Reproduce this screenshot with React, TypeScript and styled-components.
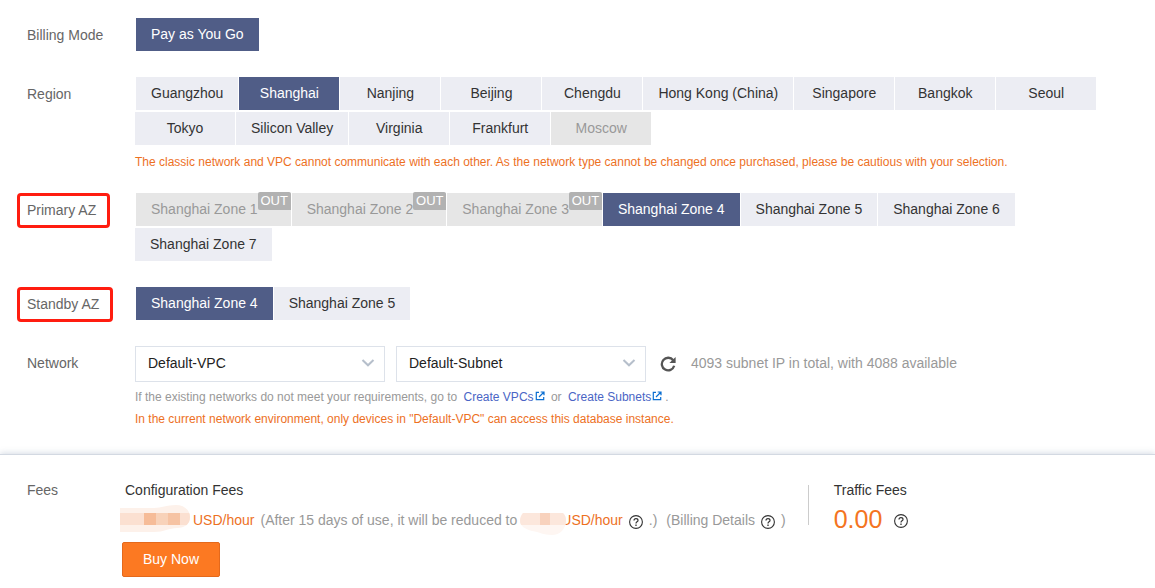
import React, { useState } from "react";
import styled, { createGlobalStyle, css } from "styled-components";

const GlobalStyle = createGlobalStyle`
  *, *::before, *::after { box-sizing: border-box; }
  body {
    margin: 0;
    background: #fff;
    color: #333;
    font-family: "Liberation Sans", Arial, sans-serif;
    font-size: 14px;
    line-height: 22px;
  }
  button, select { font: inherit; }
`;

const Page = styled.main`
  display: flex;
  flex-direction: column;
`;

const Form = styled.form`
  display: flex;
  flex-direction: column;
  gap: 20px;
  padding: 18px 27px 24px;
`;

const Row = styled.div`
  display: grid;
  grid-template-columns: 108px 1fr;
`;

const Label = styled.span<{ $boxed?: boolean }>`
  justify-self: start;
  align-self: start;
  line-height: 35px;
  color: #666;
  ${({ $boxed }) =>
    $boxed &&
    css`
      margin-left: -10px;
      padding: 0 11px 0 7px;
      line-height: 29px;
      border: 3px solid #ff1d10;
      border-radius: 4px;
    `}
`;

const Options = styled.div`
  display: flex;
  flex-wrap: wrap;
  gap: 2px 1px;
  padding-bottom: 6px;
`;

const Option = styled.button<{ $selected?: boolean; $soldOut?: boolean }>`
  position: relative;
  min-width: 100px;
  height: 33px;
  padding: 0 ${({ $soldOut }) => ($soldOut ? 33 : 15)}px 2px 15px;
  border: 0;
  background: ${({ $selected }) => ($selected ? "#505d87" : "#ecedf3")};
  color: ${({ $selected }) => ($selected ? "#fff" : "#333")};
  white-space: nowrap;
  cursor: pointer;

  &:first-child {
    margin-left: 1px;
  }

  &:disabled {
    background: #e6e6e6;
    color: #999;
    cursor: not-allowed;
  }
`;

const OutBadge = styled.span`
  position: absolute;
  top: -1px;
  right: 0;
  width: 33px;
  height: 18px;
  border-radius: 2px 2px 0 2px;
  background: #b2b2b2;
  color: #fff;
  font-size: 13px;
  line-height: 18px;
  text-align: center;
`;

const Notes = styled.div`
  font-size: 12px;
`;

const Note = styled.p<{ $warning?: boolean }>`
  margin: 0;
  color: ${({ $warning }) => ($warning ? "#ed711f" : "#999")};
`;

const DocLink = styled.a`
  margin: 0 3px;
  color: #4a65c5;
  text-decoration: none;
  svg { margin-left: 1px; }
`;

const NetworkControls = styled.div`
  display: flex;
  align-items: center;
  padding-bottom: 4px;
`;

const SelectBox = styled.div`
  position: relative;
  width: 250px;
  margin-right: 11px;

  svg {
    position: absolute;
    top: 12px;
    right: 10px;
    pointer-events: none;
  }
`;

const Select = styled.select`
  width: 100%;
  height: 36px;
  padding: 0 32px 2px 12px;
  border: 1px solid #dde2ea;
  border-radius: 0;
  background: #fff;
  color: #222;
  appearance: none;
`;

const IconButton = styled.button`
  display: inline-flex;
  padding: 0;
  border: 0;
  background: none;
  color: #555;
  cursor: pointer;
`;

const RefreshButton = styled(IconButton)`
  margin: 0 15px 0 3px;
`;

const HelpButton = styled(IconButton)`
  padding-top: 4px;
`;

const Availability = styled.span`
  padding-bottom: 2px;
  color: #999;
`;

const Footer = styled.footer`
  display: grid;
  grid-template-columns: 95px auto auto 1fr;
  padding: 24px 27px 10px;
  border-top: 1px solid #d3d9e2;
  box-shadow: 0 -1px 6px rgba(120, 140, 165, 0.3);
`;

const FooterLabel = styled.span`
  color: #666;
`;

const Fee = styled.section`
  display: flex;
  flex-direction: column;
  align-items: flex-start;
  padding-left: 3px;
`;

const Divider = styled.div`
  width: 1px;
  height: 40px;
  margin: 6px 22px 0;
  background: #ccc;
`;

const FeeTitle = styled.h2`
  margin: 0;
  font-size: 14px;
  font-weight: 400;
  line-height: 22px;
`;

const FeeLine = styled.div`
  display: flex;
  align-items: center;
  height: 36px;
  margin-left: -5px;
  padding-top: 2px;
  color: #999;
  white-space: nowrap;
`;

const Unit = styled.span<{ $covered?: boolean }>`
  margin-left: ${({ $covered }) => ($covered ? -5 : 3)}px;
  margin-right: 6px;
  color: #ed711f;
`;

const Details = styled.span`
  margin: 0 6px 0 9px;
`;

const Closing = styled.span`
  margin-left: 6px;
`;

const Amount = styled.strong`
  margin-right: 12px;
  color: #f47421;
  font-size: 25px;
  font-weight: 400;
  line-height: 36px;
`;

const TrafficLine = styled.div`
  display: flex;
  align-items: center;
`;

const BuyButton = styled.button`
  width: 98px;
  height: 35px;
  margin: 5px 0 0 -3px;
  padding: 0 0 2px;
  border: 1px solid #e4691c;
  border-radius: 2px;
  background: #fc7922;
  color: #fff;
  cursor: pointer;
`;

const Chevron = () => (
  <svg width="14" height="10" viewBox="0 0 14 10" fill="none" stroke="#b6bfcb" strokeWidth="2" aria-hidden="true">
    <path d="M1.5 2 7 7.3 12.5 2" />
  </svg>
);

const ExternalIcon = () => (
  <svg width="10" height="10" viewBox="0 0 10 10" fill="none" stroke="#0a6ed1" strokeWidth="1.2" aria-hidden="true">
    <path d="M4 1.3H1.3v7.4h7.4V6M5.7 1H9v3.3M9 1 4 6" />
  </svg>
);

const RefreshIcon = () => (
  <svg width="16" height="16" viewBox="0 0 16 16" fill="none" aria-hidden="true">
    <path d="M13.2 4.3A6.3 6.3 0 1 0 14.2 9.8" stroke="currentColor" strokeWidth="2.3" />
    <path d="M15.6 1v6H9.4z" fill="currentColor" />
  </svg>
);

const HelpIcon = () => (
  <svg width="14" height="14" viewBox="0 0 14 14" fill="none" stroke="#333" aria-hidden="true">
    <circle cx="7" cy="7" r="6.4" strokeWidth="1.1" />
    <path d="M5 5.5C5 4.2 5.8 3.6 7 3.6s2 .7 2 1.8c0 1.4-2 1.5-2 3" strokeWidth="1.2" />
    <path d="M7 9.6V11" strokeWidth="1.3" />
  </svg>
);

const Help = ({ label }: { label: string }) => (
  <HelpButton type="button" aria-label={label}>
    <HelpIcon />
  </HelpButton>
);

const PriceMask = () => (
  <svg width="70" height="30" viewBox="0 0 70 30" aria-hidden="true">
    <clipPath id="price-mask">
      <path d="M0 3h34c8 0 12-3 22-3 8 0 14 5 14 12 0 7-5 11-13 11-8 0-13 4-23 4H0z" />
    </clipPath>
    <g clipPath="url(#price-mask)">
      <path fill="#fdf1ea" d="M0 0h70v30H0z" />
      <path fill="#fbe0d1" d="M0 8h24v12H0zM60 8h10v12H60z" />
      <path fill="#f6bc98" d="M24 8h12v12H24z" />
      <path fill="#f8d2b9" d="M36 8h12v12H36z" />
      <path fill="#f6c3a3" d="M48 8h12v12H48z" />
    </g>
  </svg>
);

const DiscountMaskSvg = styled.svg`
  position: relative;
  margin-left: 3px;
`;

const DiscountMask = () => (
  <DiscountMaskSvg width="46" height="30" viewBox="0 -8 46 30" aria-hidden="true">
    <clipPath id="discount-mask">
      <path d="M3 0h40c2 2 3 4 3 7 0 9-6 15-14 15-9 0-12-3-20-4C5 16 0 13 0 8c0-3 1-6 3-8z" />
    </clipPath>
    <g clipPath="url(#discount-mask)">
      <path fill="#fef6f2" d="M0 0h46v22H0z" />
      <path fill="#fce7dc" d="M0 0h46v12H0z" />
      <path fill="#f8d2bd" d="M20 0h10v12H20z" />
    </g>
  </DiscountMaskSvg>
);

type Choice = { name: string; disabled?: boolean; out?: boolean };

const regions: Choice[] = [
  ..."Guangzhou|Shanghai|Nanjing|Beijing|Chengdu|Hong Kong (China)|Singapore|Bangkok|Seoul|Tokyo|Silicon Valley|Virginia|Frankfurt"
    .split("|")
    .map((name) => ({ name })),
  { name: "Moscow", disabled: true },
];

const primaryZones: Choice[] = [1, 2, 3, 4, 5, 6, 7].map((n) => ({
  name: `Shanghai Zone ${n}`,
  disabled: n < 4,
  out: n < 4,
}));

const standbyZones: Choice[] = [{ name: "Shanghai Zone 4" }, { name: "Shanghai Zone 5" }];

type ChoiceRowProps = {
  id: string;
  label: string;
  boxed?: boolean;
  choices: Choice[];
  initial: string;
  children?: React.ReactNode;
};

function ChoiceRow({ id, label, boxed, choices, initial, children }: ChoiceRowProps) {
  const [selected, setSelected] = useState(initial);
  return (
    <Row>
      <Label id={id} $boxed={boxed}>{label}</Label>
      <div>
        <Options role="group" aria-labelledby={id}>
          {choices.map(({ name, disabled, out }) => (
            <Option
              key={name}
              type="button"
              disabled={disabled}
              $selected={name === selected}
              $soldOut={out}
              aria-pressed={name === selected}
              onClick={() => setSelected(name)}
            >
              {name}
              {out && <OutBadge>OUT</OutBadge>}
            </Option>
          ))}
        </Options>
        {children}
      </div>
    </Row>
  );
}

export default function App() {
  return (
    <Page>
      <GlobalStyle />
      <Form>
        <ChoiceRow id="billing" label="Billing Mode" choices={[{ name: "Pay as You Go" }]} initial="Pay as You Go" />
        <ChoiceRow id="region" label="Region" choices={regions} initial="Shanghai">
          <Notes>
            <Note $warning>
              The classic network and VPC cannot communicate with each other. As the network type cannot be changed
              once purchased, please be cautious with your selection.
            </Note>
          </Notes>
        </ChoiceRow>
        <ChoiceRow id="primary" label="Primary AZ" boxed choices={primaryZones} initial="Shanghai Zone 4" />
        <ChoiceRow id="standby" label="Standby AZ" boxed choices={standbyZones} initial="Shanghai Zone 4" />
        <Row>
          <Label as="label" htmlFor="vpc">Network</Label>
          <div>
            <NetworkControls>
              <SelectBox>
                <Select id="vpc">
                  <option>Default-VPC</option>
                </Select>
                <Chevron />
              </SelectBox>
              <SelectBox>
                <Select aria-label="Subnet">
                  <option>Default-Subnet</option>
                </Select>
                <Chevron />
              </SelectBox>
              <RefreshButton type="button" aria-label="Refresh">
                <RefreshIcon />
              </RefreshButton>
              <Availability>4093 subnet IP in total, with 4088 available</Availability>
            </NetworkControls>
            <Notes>
              <Note>
                If the existing networks do not meet your requirements, go to{" "}
                <DocLink href="#vpcs">Create VPCs<ExternalIcon /></DocLink> or{" "}
                <DocLink href="#subnets">Create Subnets<ExternalIcon /></DocLink>.
              </Note>
              <Note $warning>
                In the current network environment, only devices in "Default-VPC" can access this database instance.
              </Note>
            </Notes>
          </div>
        </Row>
      </Form>
      <Footer>
        <FooterLabel>Fees</FooterLabel>
        <Fee>
          <FeeTitle>Configuration Fees</FeeTitle>
          <FeeLine>
            <PriceMask />
            <Unit>USD/hour</Unit>
            <span>(After 15 days of use, it will be reduced to</span>
            <DiscountMask />
            <Unit $covered>USD/hour</Unit>
            <Help label="About the reduced price" />
            <Closing>.)</Closing>
            <Details>(Billing Details</Details>
            <Help label="About billing details" />
            <Closing>)</Closing>
          </FeeLine>
          <BuyButton type="button">Buy Now</BuyButton>
        </Fee>
        <Divider />
        <Fee>
          <FeeTitle>Traffic Fees</FeeTitle>
          <TrafficLine>
            <Amount>0.00</Amount>
            <Help label="About traffic fees" />
          </TrafficLine>
        </Fee>
      </Footer>
    </Page>
  );
}
